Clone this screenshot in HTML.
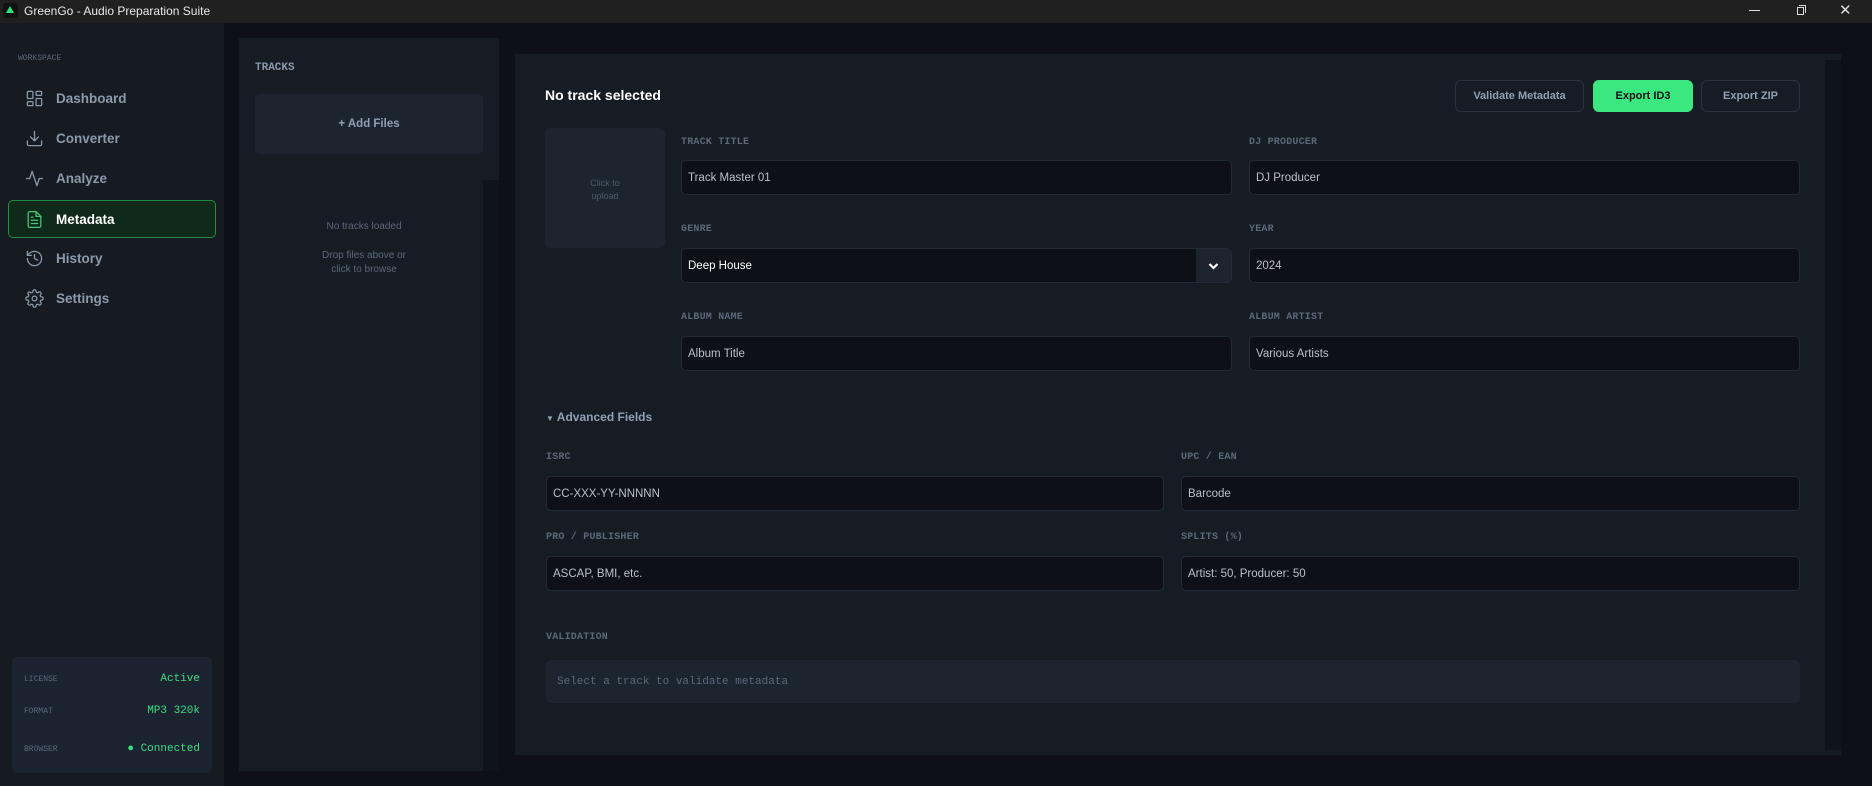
<!DOCTYPE html>
<html><head><meta charset="utf-8"><style>
*{box-sizing:border-box;margin:0;padding:0}
body{width:1872px;height:786px;background:#0d1117;font-family:"Liberation Sans",sans-serif;position:relative;overflow:hidden;color:#c9d1d9}
.a{position:absolute}
.mono{font-family:"Liberation Mono",monospace}
.lbl{position:absolute;font-family:"Liberation Mono",monospace;font-size:10px;font-weight:bold;color:#5b6878;letter-spacing:.2px}
.inp{position:absolute;background:#0d1117;border:1px solid #222b36;border-radius:5px;font-size:11.5px;color:#b8c0ca;padding-left:6px;display:flex;align-items:center}
.nav{position:absolute;left:8px;width:208px;height:38px;display:flex;align-items:center;font-size:13.5px;font-weight:bold;color:#8b9aab}
.nav svg{position:absolute;left:17px;width:19px;height:19px;fill:none;stroke:#8b9aab;stroke-width:1.6;stroke-linecap:round;stroke-linejoin:round}
.nav span{position:absolute;left:48px}
.btn{position:absolute;top:80px;height:32px;border:1px solid #2a3340;border-radius:6px;font-size:11px;font-weight:bold;color:#8fa0b3;display:flex;align-items:center;justify-content:center}
</style></head><body>
<div class="a" style="left:0;top:0;width:1872px;height:23px;background:#202020"></div>
<div class="a" style="left:3px;top:3px;width:15px;height:15px;background:#111;border-radius:3px"></div>
<div class="a" style="left:6px;top:6px;width:0;height:0;border-left:4px solid transparent;border-right:4px solid transparent;border-bottom:7px solid #2ee27a"></div>
<div class="a" style="left:24px;top:4px;font-size:12px;color:#e8e8e8">GreenGo - Audio Preparation Suite</div>
<div class="a" style="left:1749px;top:10px;width:11px;height:1px;background:#ddd"></div>
<div class="a" style="left:1797px;top:7px;width:7px;height:8px;border:1px solid #ddd"></div>
<div class="a" style="left:1799px;top:5px;width:7px;height:8px;border-top:1px solid #ddd;border-right:1px solid #ddd"></div>
<div class="a" style="left:1839px;top:1px;font-size:15px;color:#ddd">✕</div>

<div class="a" style="left:0;top:23px;width:224px;height:763px;background:#161b22"></div>
<div class="a mono" style="left:18px;top:54px;font-size:8px;color:#5b6878">WORKSPACE</div>
<div class="nav" style="top:79px"><svg viewBox="0 0 24 24"><rect x="3" y="3" width="7" height="9" rx="1"/><rect x="14" y="3" width="7" height="5" rx="1"/><rect x="14" y="12" width="7" height="9" rx="1"/><rect x="3" y="16" width="7" height="5" rx="1"/></svg><span>Dashboard</span></div>
<div class="nav" style="top:119px"><svg viewBox="0 0 24 24"><path d="M21 15v4a2 2 0 0 1-2 2H5a2 2 0 0 1-2-2v-4M7 10l5 5 5-5M12 15V3"/></svg><span>Converter</span></div>
<div class="nav" style="top:159px"><svg viewBox="0 0 24 24"><path d="M22 12h-4l-3 9L9 3l-3 9H2"/></svg><span>Analyze</span></div>
<div class="nav" style="top:200px;background:#0f2a1a;border:1px solid #238a45;border-radius:5px;color:#fff"><svg viewBox="0 0 24 24" style="stroke:#4cc476;left:16px"><path d="M14 2H6a2 2 0 0 0-2 2v16a2 2 0 0 0 2 2h12a2 2 0 0 0 2-2V8z"/><path d="M14 2v6h6M16 13H8M16 17H8M10 9H8"/></svg><span style="left:47px">Metadata</span></div>
<div class="nav" style="top:239px"><svg viewBox="0 0 24 24"><path d="M3 12a9 9 0 1 0 9-9 9.75 9.75 0 0 0-6.74 2.74L3 8"/><path d="M3 3v5h5M12 7v5l4 2"/></svg><span>History</span></div>
<div class="nav" style="top:279px"><svg viewBox="0 0 24 24"><circle cx="12" cy="12" r="3"/><path d="M19.4 15a1.65 1.65 0 0 0 .33 1.820l.06.06a2 2 0 1 1-2.83 2.83l-.06-.06a1.65 1.65 0 0 0-1.82-.33 1.65 1.65 0 0 0-1 1.51V21a2 2 0 0 1-4 0v-.09A1.650 1.650 0 0 0 9 19.4a1.65 1.65 0 0 0-1.82.33l-.06.06a2 2 0 1 1-2.83-2.83l.06-.06A1.65 1.65 0 0 0 4.68 15a1.65 1.65 0 0 0-1.51-1H3a2 2 0 0 1 0-4h.09A1.65 1.65 0 0 0 4.6 9a1.65 1.65 0 0 0-.33-1.82l-.06-.06a2 2 0 1 1 2.83-2.83l.06.06A1.65 1.65 0 0 0 9 4.68 1.65 1.65 0 0 0 10 3.17V3a2 2 0 0 1 4 0v.09a1.65 1.65 0 0 0 1 1.51 1.65 1.65 0 0 0 1.82-.33l.06-.06a2 2 0 1 1 2.83 2.83l-.06.06A1.65 1.65 0 0 0 19.4 9a1.65 1.65 0 0 0 1.51 1H21a2 2 0 0 1 0 4h-.09a1.65 1.65 0 0 0-1.51 1z"/></svg><span>Settings</span></div>

<div class="a" style="left:12px;top:657px;width:200px;height:116px;background:#1b2330;border-radius:5px"></div>
<div class="a mono" style="left:24px;top:675px;font-size:8px;color:#5b6878">LICENSE</div>
<div class="a mono" style="right:1672px;top:673px;font-size:11px;color:#3ddc7e">Active</div>
<div class="a mono" style="left:24px;top:707px;font-size:8px;color:#5b6878">FORMAT</div>
<div class="a mono" style="right:1672px;top:705px;font-size:11px;color:#3ddc7e">MP3 320k</div>
<div class="a mono" style="left:24px;top:745px;font-size:8px;color:#5b6878">BROWSER</div>
<div class="a mono" style="right:1672px;top:743px;font-size:11px;color:#3ddc7e">● Connected</div>

<div class="a" style="left:239px;top:38px;width:260px;height:733px;background:#161c24"></div>
<div class="a" style="left:483px;top:180px;width:16px;height:591px;background:#0f141b"></div>
<div class="a mono" style="left:255px;top:62px;font-size:11px;font-weight:bold;color:#8b9aab">TRACKS</div>
<div class="a" style="left:255px;top:94px;width:228px;height:60px;background:#1c2430;border-radius:5px;display:flex;align-items:center;justify-content:center;font-size:11.5px;font-weight:bold;color:#8fa0b3">+ Add Files</div>
<div class="a" style="left:255px;top:221px;width:218px;text-align:center;font-size:10px;color:#5b6878">No tracks loaded</div>
<div class="a" style="left:255px;top:249px;width:218px;text-align:center;font-size:10px;color:#5b6878;line-height:14px">Drop files above or<br>click to browse</div>

<div class="a" style="left:515px;top:54px;width:1326px;height:701px;background:#161c24"></div>
<div class="a" style="left:1825px;top:60px;width:16px;height:690px;background:#0f141b"></div>
<div class="a" style="left:545px;top:87px;font-size:14px;font-weight:bold;color:#fff">No track selected</div>
<div class="btn" style="left:1455px;width:129px">Validate Metadata</div>
<div class="btn" style="left:1593px;width:100px;background:#3be87f;border-color:#3be87f;color:#0d1117">Export ID3</div>
<div class="btn" style="left:1701px;width:99px">Export ZIP</div>
<div class="a" style="left:545px;top:128px;width:120px;height:120px;background:#1c2430;border-radius:5px;text-align:center;padding-top:49px;font-size:9px;line-height:13px;color:#4e5b6a">Click to<br>upload</div>

<div class="lbl" style="left:681px;top:137px">TRACK TITLE</div>
<div class="inp" style="left:681px;top:160px;width:551px;height:35px">Track Master 01</div>
<div class="lbl" style="left:1249px;top:137px">DJ PRODUCER</div>
<div class="inp" style="left:1249px;top:160px;width:551px;height:35px">DJ Producer</div>
<div class="lbl" style="left:681px;top:224px">GENRE</div>
<div class="inp" style="left:681px;top:248px;width:551px;height:35px;color:#fff">Deep House<div class="a" style="right:0;top:0;width:35px;height:33px;background:#1c2430;display:flex;align-items:center;justify-content:center"><svg width="11" height="8" viewBox="0 0 11 8"><path d="M1.5 2l4 4 4-4" fill="none" stroke="#fff" stroke-width="2.2"/></svg></div></div>
<div class="lbl" style="left:1249px;top:224px">YEAR</div>
<div class="inp" style="left:1249px;top:248px;width:551px;height:35px">2024</div>
<div class="lbl" style="left:681px;top:312px">ALBUM NAME</div>
<div class="inp" style="left:681px;top:336px;width:551px;height:35px">Album Title</div>
<div class="lbl" style="left:1249px;top:312px">ALBUM ARTIST</div>
<div class="inp" style="left:1249px;top:336px;width:551px;height:35px">Various Artists</div>

<div class="a" style="left:546px;top:410px;font-size:12px;font-weight:bold;color:#8fa0b3"><span style="font-size:8px">▼</span> Advanced Fields</div>
<div class="lbl" style="left:546px;top:452px">ISRC</div>
<div class="inp" style="left:546px;top:476px;width:618px;height:35px">CC-XXX-YY-NNNNN</div>
<div class="lbl" style="left:1181px;top:452px">UPC / EAN</div>
<div class="inp" style="left:1181px;top:476px;width:619px;height:35px">Barcode</div>
<div class="lbl" style="left:546px;top:532px">PRO / PUBLISHER</div>
<div class="inp" style="left:546px;top:556px;width:618px;height:35px">ASCAP, BMI, etc.</div>
<div class="lbl" style="left:1181px;top:532px">SPLITS (%)</div>
<div class="inp" style="left:1181px;top:556px;width:619px;height:35px">Artist: 50, Producer: 50</div>
<div class="lbl" style="left:546px;top:632px">VALIDATION</div>
<div class="a mono" style="left:546px;top:660px;width:1254px;height:43px;background:#1c2430;border-radius:5px;padding-left:11px;display:flex;align-items:center;font-size:11px;color:#5b6878">Select a track to validate metadata</div>
</body></html>
